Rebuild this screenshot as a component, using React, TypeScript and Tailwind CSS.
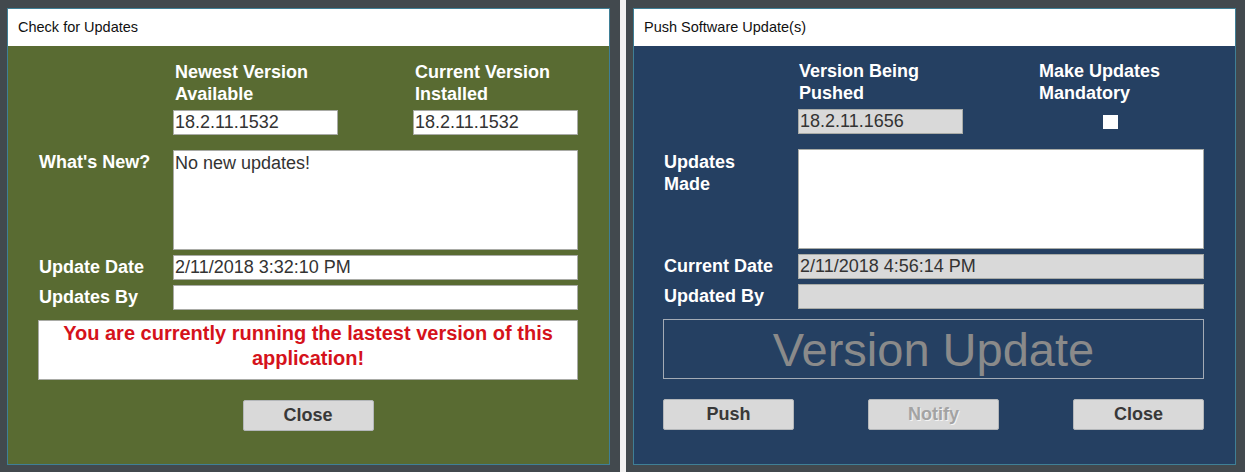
import React from "react";

const FONT = "font-['Liberation_Sans',Arial,sans-serif]";

function Field({ value = "", gray = false, className = "" }: { value?: string; gray?: boolean; className?: string }) {
  return (
    <div
      className={`h-[25px] border border-[#a9aba6] px-[1px] text-[18px] leading-[23px] text-[#333] whitespace-nowrap overflow-hidden ${gray ? "bg-[#d9d9d9]" : "bg-white"} ${className}`}
    >
      {value}
    </div>
  );
}

function Label({ children, className = "" }: { children: React.ReactNode; className?: string }) {
  return <div className={`text-[18px] font-bold leading-[22px] text-white ${className}`}>{children}</div>;
}

function Btn({ children, disabled = false }: { children: React.ReactNode; disabled?: boolean }) {
  return (
    <button
      className={`w-[131px] h-[31px] bg-[#d9d9d9] border border-[#b4b7ba] rounded-[2px] text-[18px] font-bold ${disabled ? "text-[#a3a3a3] [text-shadow:1px_1px_0_#f4f4f4]" : "text-[#383838]"}`}
    >
      {children}
    </button>
  );
}

function Window({ title, bg, children }: { title: string; bg: string; children: React.ReactNode }) {
  return (
    <div className="w-[603px] h-[457px] border border-[#3f7f96] flex flex-col">
      <div className="h-[37px] bg-white flex items-center pl-[10px] font-['Liberation_Sans',Arial,sans-serif] text-[14.5px] text-[#111]">
        {title}
      </div>
      <div className={`flex-1 ${bg} ${FONT} pl-[30px] pt-[15px]`}>{children}</div>
    </div>
  );
}

function CheckForUpdates() {
  return (
    <Window title="Check for Updates" bg="bg-[#596b32]">
      <div className="grid grid-cols-[135px_405px]">
        <div />
        <div className="flex gap-[75px]">
          <div className="w-[165px]">
            <Label className="pl-[2px]">Newest Version<br />Available</Label>
            <Field value="18.2.11.1532" className="mt-[5px]" />
          </div>
          <div className="w-[165px]">
            <Label className="pl-[2px]">Current Version<br />Installed</Label>
            <Field value="18.2.11.1532" className="mt-[5px]" />
          </div>
        </div>

        <Label className="mt-[16px] pl-[1px]">What's New?</Label>
        <div className="mt-[15px] h-[100px] bg-white border border-[#a9aba6] px-[1px] pt-[1px] text-[18px] leading-[23px] text-[#333]">
          No new updates!
        </div>

        <Label className="mt-[5px] pl-[1px] leading-[25px]">Update Date</Label>
        <Field value="2/11/2018 3:32:10 PM" className="mt-[5px]" />

        <Label className="mt-[5px] pl-[1px] leading-[25px]">Updates By</Label>
        <Field className="mt-[5px]" />
      </div>

      <div className="mt-[10px] w-[540px] h-[60px] bg-white border border-[#a9aba6] flex items-center justify-center text-center text-[20px] font-bold leading-[25px] text-[#d5121b] pb-[8px]">
        You are currently running the lastest version of this
        <br />
        application!
      </div>

      <div className="mt-[20px] w-[540px] flex justify-center">
        <Btn>Close</Btn>
      </div>
    </Window>
  );
}

function PushUpdate() {
  return (
    <Window title="Push Software Update(s)" bg="bg-[#254062]">
      <div className="-mt-[1px] grid grid-cols-[134px_406px]">
        <div />
        <div className="flex gap-[75px]">
          <div className="w-[165px]">
            <Label className="pl-[1px]">Version Being<br />Pushed</Label>
            <Field value="18.2.11.1656" gray className="mt-[5px]" />
          </div>
          <div className="w-[166px]">
            <Label className="pl-[1px]">Make Updates<br />Mandatory</Label>
            <div className="mt-[5px] h-[25px] flex items-center pl-[65px]">
              <div className="w-[15px] h-[14px] bg-white" />
            </div>
          </div>
        </div>

        <Label className="mt-[17px]">Updates<br />Made</Label>
        <div className="mt-[15px] h-[100px] bg-white border border-[#a9aba6]" />

        <Label className="mt-[5px] leading-[25px]">Current Date</Label>
        <Field value="2/11/2018 4:56:14 PM" gray className="mt-[5px]" />

        <Label className="mt-[5px] leading-[25px]">Updated By</Label>
        <Field gray className="mt-[5px]" />
      </div>

      <div className="mt-[10px] -ml-[1px] w-[541px] h-[60px] border border-[#a3abb5] flex items-center justify-center text-[47px] leading-none text-[#8a8a8a]">
        Version Update
      </div>

      <div className="mt-[20px] -ml-[1px] w-[541px] flex justify-between">
        <Btn>Push</Btn>
        <Btn disabled>Notify</Btn>
        <Btn>Close</Btn>
      </div>
    </Window>
  );
}

export default function App() {
  return (
    <div className="w-[1245px] h-[472px] bg-[#42494e] flex">
      <div className="w-[620px] pl-[7px] pt-[8px]">
        <CheckForUpdates />
      </div>
      <div className="w-[6px] bg-[#f2f2f2]" />
      <div className="flex-1 pl-[7px] pt-[8px]">
        <PushUpdate />
      </div>
    </div>
  );
}
